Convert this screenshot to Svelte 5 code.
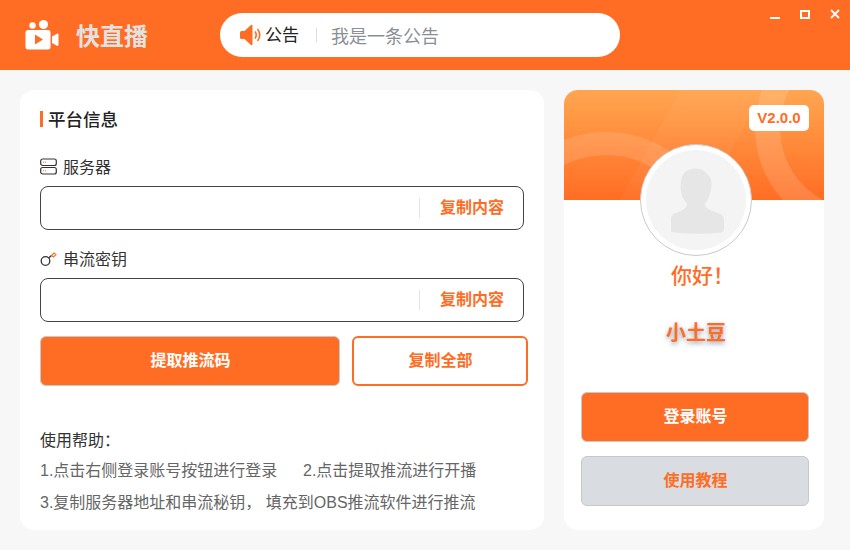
<script>
	const fields = [
		{ label: '服务器', icon: 'server' },
		{ label: '串流密钥', icon: 'key' }
	];
</script>

<div class="app">
	<header>
		<svg class="logo" viewBox="0 0 34 30" width="34" height="30">
			<circle cx="7.5" cy="5.5" r="3.2" fill="#fff" />
			<circle cx="18.5" cy="4.5" r="4.5" fill="#fff" />
			<rect x="0.5" y="10" width="25" height="19.5" rx="2.5" fill="#fff" />
			<path d="M27 16.5l5-2.8q1.500-.6 1.500 1v10q0 1.600-1.500 1l-5-2.800z" fill="#fff" />
			<path d="M10 14.500l8 5-8 5z" fill="#ff6d24" />
		</svg>
		<div class="brand">快直播</div>
		<div class="notice">
			<svg viewBox="0 0 21 22" width="21" height="22">
				<path d="M0 8.500q0-1.500 1.500-1.500h3L11 1q1.500-1 1.500 1v18q0 2-1.500 1l-6.500-6h-3q-1.500 0-1.500-1.500z" fill="#ff6d24" />
				<path d="M15 7.500q2.500 3.500 0 7M17.500 5q4.500 6 0 12" fill="none" stroke="#ff6d24" stroke-width="1.600" />
			</svg>
			<span class="notice-label">公告</span>
			<i class="notice-sep"></i>
			<span class="notice-text">我是一条公告</span>
		</div>
		<div class="window-btns">
			<i class="win-min"></i>
			<i class="win-max"></i>
			<svg viewBox="0 0 10 10" width="10" height="10">
				<path d="M1 1l8 8M9 1l-8 8" stroke="#fff" stroke-width="1.800" />
			</svg>
		</div>
	</header>

	<main>
		<section class="card left">
			<h2>平台信息</h2>

			{#each fields as field}
				<div class="field">
					<div class="field-label">
						{#if field.icon === 'server'}
							<svg viewBox="0 0 17 17" width="17" height="17">
								<rect x="0.700" y="1" width="15.600" height="6.500" rx="2" fill="none" stroke="#333" stroke-width="1.200" />
								<rect x="0.700" y="9.500" width="15.600" height="6.500" rx="2" fill="none" stroke="#333" stroke-width="1.200" />
								<path d="M3 4.200h1M5 4.200h1M3 12.800h1M5 12.800h1" stroke="#ff6d24" stroke-width="1" />
							</svg>
						{:else}
							<svg viewBox="0 0 17 17" width="17" height="17">
								<circle cx="5.500" cy="11" r="4.300" fill="none" stroke="#333" stroke-width="1.300" />
								<path d="M8.700 8l3-2.700" stroke="#333" stroke-width="1.300" />
								<path d="M11.500 5.500l2.500-2.500 2 1.500-2.500 2.500z" stroke="#ff6d24" stroke-width="1.100" fill="none" />
							</svg>
						{/if}
						<span>{field.label}</span>
					</div>
					<div class="input">
						<i></i>
						<span>复制内容</span>
					</div>
				</div>
			{/each}

			<div class="actions">
				<button class="primary fetch">提取推流码</button>
				<button class="outline">复制全部</button>
			</div>

			<div class="help">
				<p class="help-title">使用帮助：</p>
				<p><span class="step">1.点击右侧登录账号按钮进行登录</span>2.点击提取推流进行开播</p>
				<p>3.复制服务器地址和串流秘钥， 填充到OBS推流软件进行推流</p>
			</div>
		</section>

		<section class="card right">
			<div class="banner">
				<svg class="banner-art" viewBox="0 0 260 110" width="260" height="110">
					<circle cx="42" cy="157" r="103.500" fill="none" stroke="#fff" stroke-opacity="0.13" stroke-width="23" />
					<circle cx="298" cy="38" r="94.500" fill="none" stroke="#fff" stroke-opacity="0.14" stroke-width="25" />
					<path d="M56 110L116 0H200L140 110z" fill="#fff" fill-opacity="0.04" />
				</svg>
				<div class="version">V2.0.0</div>
			</div>
			<div class="avatar">
				<svg viewBox="0 0 100 100" width="100" height="100">
					<circle cx="50" cy="50" r="50" fill="#f4f4f4" />
					<path d="M25 79q-1 3 3 3.500 22 2.500 47 0 3-.5 3-3.500v-9q0-5-5-6.500l-8-3q-6-2-6-7 6-7 6.500-19 0-8-4-10-4-6-12-6-9 0-12.500 6-2.500 5-2.500 13 .5 10 6.500 16 0 5-6 7.500l-7 2.500q-3 1.500-3 6z" fill="#e6e6e6" />
				</svg>
			</div>
			<div class="hello">你好！</div>
			<div class="nick">小土豆</div>
			<div class="side-btns">
				<button class="primary login">登录账号</button>
				<button class="tutorial">使用教程</button>
			</div>
		</section>
	</main>
</div>

<style>
	:global(body) {
		margin: 0;
	}

	.app {
		width: 850px;
		height: 550px;
		display: flex;
		flex-direction: column;
		background: #f7f7f7;
		font-family: "Noto Sans CJK SC", "Noto Sans", sans-serif;
		overflow: hidden;
	}

	header {
		position: relative;
		height: 70px;
		flex: none;
		display: flex;
		align-items: center;
		padding-left: 25px;
		box-sizing: border-box;
		background: #ff6d24;
	}

	.brand {
		margin-left: 17px;
		width: 144px;
		font-size: 24px;
		font-weight: 700;
		color: #e2e2e2;
		line-height: 30px;
	}

	.notice {
		width: 400px;
		height: 44px;
		margin-top: -1px;
		display: flex;
		align-items: center;
		padding-left: 20px;
		box-sizing: border-box;
		background: #fff;
		border-radius: 22px;
	}

	.notice-label {
		margin-left: 4px;
		margin-bottom: 2px;
		width: 35px;
		font-size: 17px;
		color: #222;
	}

	.notice-sep {
		width: 1px;
		height: 14px;
		margin: 0 14px 0 16px;
		background: #ddd;
	}

	.notice-text {
		font-size: 18px;
		color: #8a8f96;
	}

	.window-btns {
		position: absolute;
		top: 9px;
		right: 10px;
		display: flex;
		align-items: center;
		gap: 20px;
	}

	.win-min {
		width: 10px;
		height: 2px;
		margin-top: 8px;
		background: #fff;
	}

	.win-max {
		width: 6px;
		height: 5px;
		border: 2px solid #fff;
	}

	main {
		flex: 1;
		display: flex;
		gap: 20px;
		padding: 20px 26px 20px 20px;
	}

	.card {
		background: #fff;
		border-radius: 14px;
		box-sizing: border-box;
	}

	.left {
		width: 524px;
		padding: 21px 16px 0 20px;
	}

	h2 {
		margin: 0 0 28px;
		padding-left: 5px;
		font-size: 17.500px;
		line-height: 20px;
		font-weight: 500;
		color: #222;
		border-left: 3px solid #ff6d24;
		height: 16px;
		display: flex;
		align-items: center;
	}

	.field {
		margin-bottom: 17px;
	}

	.field-label {
		display: flex;
		align-items: center;
		gap: 6px;
		height: 22px;
		margin-bottom: 9px;
		font-size: 16px;
		color: #333;
	}

	.input {
		width: 484px;
		height: 44px;
		box-sizing: border-box;
		display: flex;
		align-items: center;
		justify-content: flex-end;
		padding-right: 19px;
		border: 1px solid #444;
		border-radius: 8px;
		font-size: 16px;
		font-weight: 700;
		color: #ff6d24;
	}

	.input span {
		margin-bottom: 4px;
	}

	.input i {
		width: 1px;
		height: 20px;
		margin-right: 20px;
		background: #e4e4e4;
	}

	.actions {
		display: flex;
		gap: 12px;
		margin-top: -3px;
	}

	button {
		height: 50px;
		box-sizing: border-box;
		border-radius: 6px;
		font-family: inherit;
		font-size: 16px;
		font-weight: 700;
		padding: 0 0 4px 1px;
	}

	.primary {
		background: #ff6d24;
		border: 1px solid #c8c8c8;
		color: #fff;
	}

	.fetch {
		width: 300px;
	}

	.outline {
		width: 176px;
		background: #fff;
		border: 2px solid #ff6d24;
		color: #ff6d24;
	}

	.help {
		margin-top: 39px;
		font-family: "Liberation Sans", "Noto Sans CJK SC", sans-serif;
		font-size: 16px;
		color: #666;
	}

	.help p {
		margin: 0;
		height: 32px;
		line-height: 32px;
		white-space: nowrap;
	}

	.help .help-title {
		color: #333;
		height: 30px;
		line-height: 32px;
	}

	.step {
		display: inline-block;
		width: 263px;
	}

	.right {
		position: relative;
		width: 260px;
		display: flex;
		flex-direction: column;
		align-items: center;
		overflow: hidden;
	}

	.banner {
		position: relative;
		width: 100%;
		height: 110px;
		flex: none;
		background: linear-gradient(#ffa650, #ff6d24);
	}

	.banner-art {
		display: block;
	}

	.version {
		position: absolute;
		top: 15px;
		right: 15px;
		width: 60px;
		height: 26px;
		line-height: 26px;
		text-align: center;
		background: #fff;
		border-radius: 5px;
		font-family: "Liberation Sans", sans-serif;
		font-size: 15px;
		font-weight: 700;
		color: #ff6d24;
	}

	.avatar {
		position: absolute;
		top: 54px;
		left: 76px;
		width: 100px;
		height: 100px;
		padding: 5px;
		background: #fff;
		border: 1px solid #c9c9c9;
		border-radius: 50%;
	}

	.avatar svg {
		display: block;
	}

	.hello {
		margin-top: 58px;
		margin-left: 17px;
		height: 32px;
		line-height: 32px;
		font-size: 21px;
		font-weight: 500;
		color: #ff6d24;
	}

	.nick {
		margin-top: 27px;
		padding-left: 4px;
		height: 30px;
		line-height: 30px;
		font-size: 20px;
		font-weight: 700;
		color: #ff6d24;
		text-shadow: 0 2px 5px rgba(60, 80, 110, 0.6);
	}

	.side-btns {
		margin-top: 45px;
		margin-left: 2px;
		display: flex;
		flex-direction: column;
		gap: 14px;
	}

	.login, .tutorial {
		width: 228px;
	}

	.tutorial {
		background: #d9dce0;
		border: 1px solid #c8c8c8;
		color: #ff6d24;
	}
</style>
